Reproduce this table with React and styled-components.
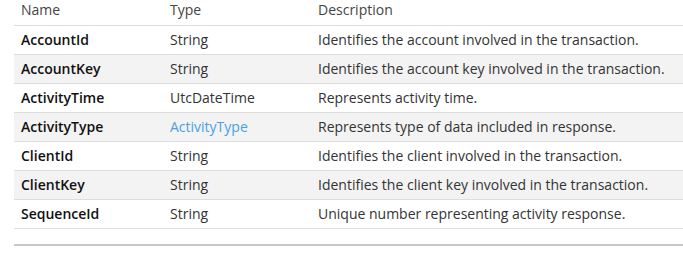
import React from "react";
import styled, { createGlobalStyle } from "styled-components";

const Global = createGlobalStyle`
  html, body { margin: 0; padding: 0; background: #fff; }
  body { font-family: "Open Sans", "Liberation Sans", sans-serif; font-size: 14px; color: #333; }
`;

const Page = styled.div`
  padding: 0 0 0 14px;
`;

const Table = styled.table`
  width: 100%;
  border-collapse: collapse;
  table-layout: fixed;
`;

const Th = styled.th`
  text-align: left;
  font-weight: 400;
  color: #444;
  height: 25px;
  padding: 0 7px 5px;
  border-bottom: 1px solid #ddd;
  vertical-align: middle;
  width: ${(p) => p.$w || "auto"};
  box-sizing: border-box;
`;

const Tr = styled.tr`
  background: ${(p) => (p.$alt ? "#f3f3f3" : "#fff")};
`;

const Td = styled.td`
  height: 29px;
  padding: 0 7px;
  border-bottom: 1px solid #ddd;
  color: #333;
  vertical-align: middle;
  white-space: nowrap;
  box-sizing: border-box;
  font-weight: ${(p) => (p.$bold ? 600 : 400)};
  ${(p) => p.$bold && "color: #111;"}
`;

const Link = styled.a`
  color: #4a9fe6;
  text-decoration: none;
`;

const Rule = styled.hr`
  margin: 15px 0 0 0;
  border: 0;
  border-top: 2px solid #c8c8c8;
`;

const rows = [
  ["AccountId", "String", "Identifies the account involved in the transaction."],
  ["AccountKey", "String", "Identifies the account key involved in the transaction."],
  ["ActivityTime", "UtcDateTime", "Represents activity time."],
  ["ActivityType", "ActivityType", "Represents type of data included in response.", true],
  ["ClientId", "String", "Identifies the client involved in the transaction."],
  ["ClientKey", "String", "Identifies the client key involved in the transaction."],
  ["SequenceId", "String", "Unique number representing activity response."],
];

export default function App() {
  return (
    <Page>
      <Global />
      <Table>
        <thead>
          <tr>
            <Th $w="149px">Name</Th>
            <Th $w="148px">Type</Th>
            <Th>Description</Th>
          </tr>
        </thead>
        <tbody>
          {rows.map(([n, t, d, link], i) => (
            <Tr key={n} $alt={i % 2 === 1}>
              <Td $bold>{n}</Td>
              <Td>{link ? <Link href="#">{t}</Link> : t}</Td>
              <Td>{d}</Td>
            </Tr>
          ))}
        </tbody>
      </Table>
      <Rule />
    </Page>
  );
}
